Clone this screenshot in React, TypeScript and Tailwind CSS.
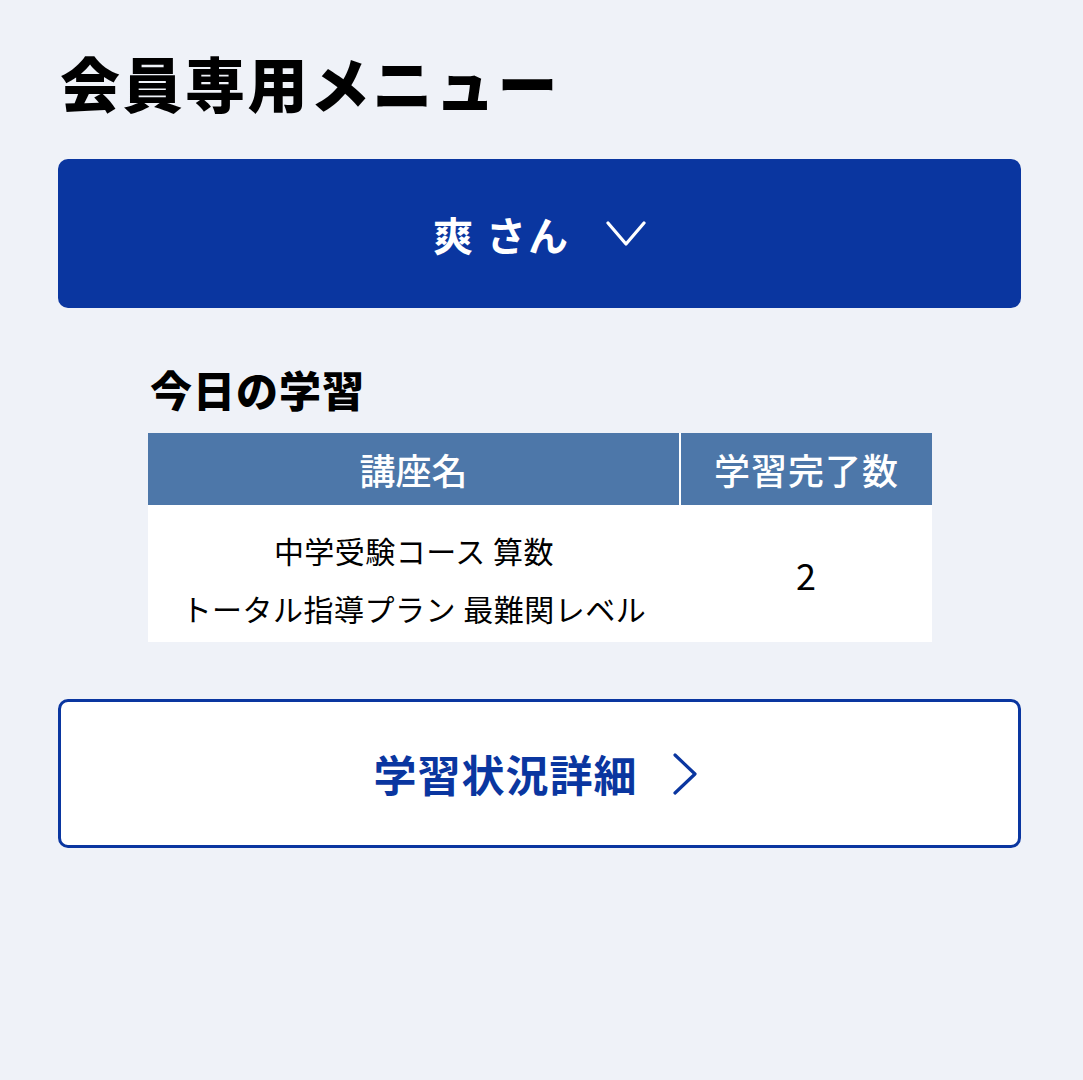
const jp = { fontFamily: '"Noto Sans CJK JP", "Noto Sans", sans-serif' };

function ChevronDownIcon() {
  return (
    <svg width="40" height="26" viewBox="0 0 40 26" fill="none" className="ml-[36px]">
      <polyline points="2,2 20,23 38,2" stroke="currentColor" strokeWidth="3.2" strokeLinecap="round" strokeLinejoin="round" />
    </svg>
  );
}

function ChevronRightIcon() {
  return (
    <svg width="26" height="42" viewBox="0 0 26 42" fill="none" className="ml-[34px]">
      <polyline points="3,2 23,21 3,40" stroke="currentColor" strokeWidth="3.2" strokeLinecap="round" strokeLinejoin="round" />
    </svg>
  );
}

export default function App() {
  return (
    <div className="min-h-[1080px] w-full bg-[#eff2f8] text-black" style={jp}>
      <div className="pl-[58px] pr-[62px] pt-[44px]">
        <h1 className="text-[60px] font-black leading-[76px] tracking-[2.5px] pl-[2px]">
          会員専用メニュー
        </h1>

        <button className="mt-[39px] flex h-[149px] w-full items-center justify-center rounded-[10px] bg-[#0a36a0] text-white">
          <span className="text-[40px] font-bold tracking-[2px]">爽 さん</span>
          <ChevronDownIcon />
        </button>

        <section className="ml-[90px] mt-[50px] w-[784px]">
          <h2 className="text-[42px] font-black leading-[62px] pl-[2px] tracking-[1px]">今日の学習</h2>
          <table className="mt-[13px] w-full border-collapse">
            <thead>
              <tr className="h-[72px] bg-[#4d77a9] text-white">
                <th className="w-[532px] border-r-2 border-white text-[36px] font-medium">講座名</th>
                <th className="text-[36px] font-medium tracking-[1px]">学習完了数</th>
              </tr>
            </thead>
            <tbody>
              <tr className="bg-white">
                <td className="pb-[5px] pt-[16px] text-center text-[30px] leading-[58px] tracking-[0.5px]">
                  <p>中学受験コース 算数</p>
                  <p>トータル指導プラン 最難関レベル</p>
                </td>
                <td className="text-center text-[36px]">2</td>
              </tr>
            </tbody>
          </table>
        </section>

        <button className="mt-[57px] flex h-[149px] w-full items-center justify-center rounded-[10px] border-[3px] border-[#0a36a0] bg-white pr-[8px] text-[#0a36a0]">
          <span className="text-[43px] font-bold tracking-[1px]">学習状況詳細</span>
          <ChevronRightIcon />
        </button>
      </div>
    </div>
  );
}
